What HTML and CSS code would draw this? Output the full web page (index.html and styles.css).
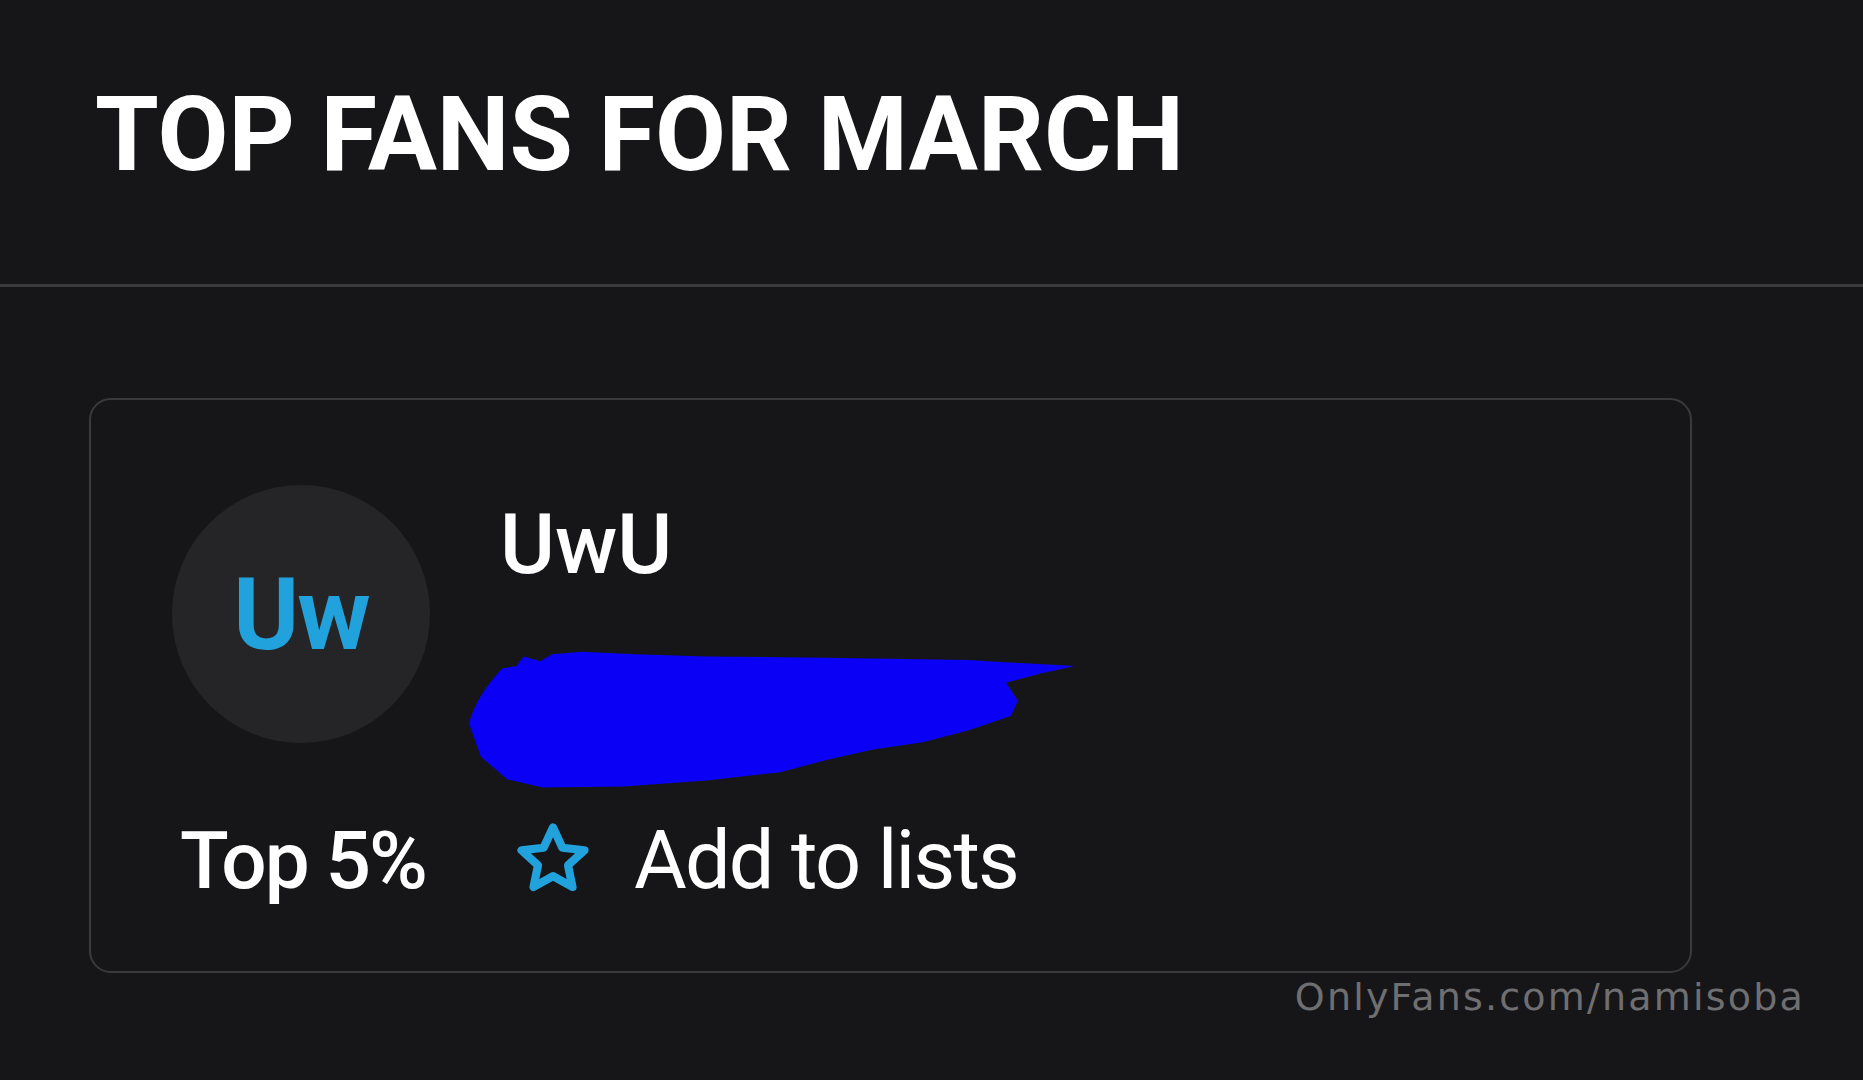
FILE: index.html
```html
<!DOCTYPE html>
<html lang="en">
<head>
<meta charset="utf-8">
<title>Top fans for March</title>
<link rel="stylesheet" href="styles.css">
</head>
<body>
<header class="page-head">
  <h1 class="title">TOP FANS FOR MARCH</h1>
</header>
<main class="content">
  <section class="card">
    <div class="card-top">
      <div class="avatar">Uw</div>
      <div class="info">
        <div class="name">UwU</div>
        <svg class="scribble" viewBox="0 0 510 120" preserveAspectRatio="none">
          <path d="M0,64 C4,48 16,30 28,18 L40,16 L46,8 L60,12 L70,6 L95,4 L140,6 L200,8 L300,9 L420,11 L510,16 L482,22 L452,30 L462,45 L456,58 L420,70 L382,80 L340,86 L300,95 L262,105 L200,112 L130,117 L62,118 L32,111 L10,92 Z" fill="#0a00f5"/>
        </svg>
      </div>
    </div>
    <div class="card-foot">
      <span class="rank">Top 5%</span>
      <span class="add">
        <svg class="star" viewBox="0 0 24 24"><path d="M12 2.8l2.75 5.9 6.45.75-4.8 4.4 1.3 6.35L12 17l-5.7 3.2 1.3-6.35-4.8-4.4 6.45-.75z" fill="none" stroke="#22a2dc" stroke-width="2.4" stroke-linejoin="round"/></svg>
        <span class="add-label">Add to lists</span>
      </span>
    </div>
  </section>
  <div class="watermark">OnlyFans.com/namisoba</div>
</main>
</body>
</html>
```
FILE: styles.css
```css
html, body {
  margin: 0;
  padding: 0;
  background: #161618;
  width: 1863px;
  height: 1080px;
  overflow: hidden;
}
body {
  font-family: Roboto, "Liberation Sans", sans-serif;
  color: #ffffff;
  position: relative;
}
.page-head {
  padding: 83px 0 98px 95px;
  border-bottom: 3px solid #3a3a3d;
}
.title {
  margin: 0;
  font-size: 103px;
  line-height: 1;
  font-weight: 700;
  letter-spacing: 0;
}
.content {
  padding: 111px 0 0 89px;
}
.card {
  width: 1603px;
  box-sizing: border-box;
  border: 2px solid #3a3a3d;
  border-radius: 22px;
  padding: 85px 0 70px 0;
}
.card-top {
  display: flex;
  align-items: flex-start;
  padding-left: 81px;
}
.avatar {
  width: 258px;
  height: 258px;
  border-radius: 50%;
  background: #252528;
  color: #22a2dc;
  font-size: 100px;
  font-weight: 700;
  display: flex;
  align-items: center;
  justify-content: center;
  letter-spacing: -2px;
  flex: none;
}
.info {
  margin-left: 70px;
  margin-top: 18px;
  display: flex;
  flex-direction: column;
}
.name {
  font-size: 84px;
  line-height: 1;
  font-weight: 500;
}
.scribble {
  display: block;
  width: 606px;
  height: 143px;
  margin: 60px 0 0 -31px;
}
.card-foot {
  display: flex;
  align-items: center;
  margin-top: 30px;
  padding-left: 89px;
  line-height: 1;
}
.rank {
  font-size: 80px;
  font-weight: 500;
  letter-spacing: -2px;
}
.add {
  display: flex;
  align-items: center;
  margin-left: 86px;
}
.star {
  width: 82px;
  height: 82px;
  margin-top: -4px;
}
.add-label {
  margin-left: 40px;
  font-size: 81px;
  font-weight: 400;
  letter-spacing: -1.8px;
}
.watermark {
  position: absolute;
  right: 58px;
  top: 978px;
  font-family: "DejaVu Sans", sans-serif;
  font-size: 38px;
  line-height: 1;
  color: #6f6f72;
  letter-spacing: 2.2px;
}
```
